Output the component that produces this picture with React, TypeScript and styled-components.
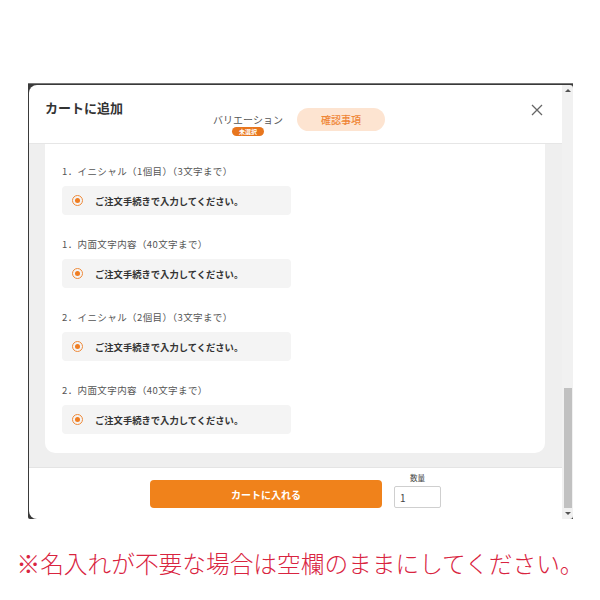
import React from 'react'
import styled, { createGlobalStyle } from 'styled-components'

const GlobalStyle = createGlobalStyle`
  body {
    margin: 0;
    background: #ffffff;
    font-family: 'Noto Sans CJK JP', 'Noto Sans', sans-serif;
  }
`

const Page = styled.div`
  width: 600px;
  height: 600px;
  padding-top: 83px;
  box-sizing: border-box;
`

const Frame = styled.div`
  margin-left: 28px;
  width: 545px;
  height: 436px;
  background: #3a3a3a;
  display: flex;
  padding: 1px 0 0 1px;
  box-sizing: border-box;
  border-top: 1px solid #777;
  border-radius: 0 0 0 2px;
`

const Modal = styled.div`
  flex: 1;
  display: flex;
  flex-direction: column;
  background: #ffffff;
  border-radius: 8px 0 0 8px;
  overflow: hidden;
`

const Header = styled.div`
  display: grid;
  grid-template-columns: 1fr auto 1fr;
  height: 58px;
  padding: 0 17px 0 16px;
  border-bottom: 1px solid #e6e6e6;
  box-sizing: content-box;
`

const Title = styled.div`
  font-size: 13px;
  font-weight: 700;
  color: #333;
  padding-top: 14px;
  line-height: 18px;
`

const Tabs = styled.div`
  display: flex;
  align-items: flex-start;
  gap: 14px;
  padding-top: 23px;
  margin-left: 8px;
`

const TabPlain = styled.div`
  display: flex;
  flex-direction: column;
  align-items: center;
  width: 70px;
  padding-top: 5px;
`

const TabLabel = styled.div`
  font-size: 10px;
  color: #555;
  line-height: 13px;
`

const Badge = styled.div`
  margin-top: 1px;
  background: #e8761e;
  color: #fff;
  font-size: 6px;
  font-weight: 700;
  line-height: 9px;
  padding: 0 7px;
  border-radius: 5px;
`

const TabActive = styled.div`
  width: 88px;
  height: 23px;
  border-radius: 12px;
  background: #fde4d1;
  color: #ef8636;
  font-size: 10px;
  font-weight: 500;
  display: flex;
  align-items: center;
  justify-content: center;
`

const Close = styled.button`
  justify-self: end;
  margin-top: 17px;
  width: 16px;
  height: 16px;
  padding: 0;
  border: none;
  background: none;
  display: flex;
  align-items: center;
  justify-content: center;
`

const Body = styled.div`
  flex: 1;
  background: #efefef;
  padding: 0 17px 14px 16px;
  display: flex;
  flex-direction: column;
`

const Card = styled.div`
  flex: 1;
  background: #ffffff;
  border-radius: 0 0 10px 10px;
  padding: 21px 17px 18px 17px;
  display: flex;
  flex-direction: column;
`

const Field = styled.div`
  display: flex;
  flex-direction: column;
  & + & {
    margin-top: 23px;
  }
`

const FieldLabel = styled.div`
  font-size: 9.5px;
  letter-spacing: 0.4px;
  color: #555;
  line-height: 13px;
  margin-bottom: 8px;
`

const Option = styled.div`
  width: 229px;
  height: 29px;
  background: #f4f4f4;
  border-radius: 4px;
  display: flex;
  align-items: center;
  padding-left: 10px;
  box-sizing: border-box;
  gap: 12px;
`

const Radio = styled.span`
  width: 9px;
  height: 9px;
  border-radius: 50%;
  border: 1.5px solid #ef8a3a;
  display: flex;
  align-items: center;
  justify-content: center;
  &::after {
    content: '';
    width: 5px;
    height: 5px;
    border-radius: 50%;
    background: #ef7d22;
  }
`

const OptionText = styled.span`
  font-size: 9.3px;
  font-weight: 700;
  color: #333;
`

const Footer = styled.div`
  height: 52px;
  border-top: 1px solid #e4e4e4;
  display: flex;
  justify-content: center;
  align-items: flex-start;
  gap: 12px;
  padding-top: 11px;
  box-sizing: border-box;
`

const CartButton = styled.button`
  width: 232px;
  height: 28px;
  border: none;
  border-radius: 4px;
  background: #f0821b;
  color: #fff;
  font-family: inherit;
  font-size: 10px;
  font-weight: 700;
  margin-top: 1px;
`

const Qty = styled.div`
  display: flex;
  flex-direction: column;
  align-items: center;
  margin-top: -7px;
`

const QtyLabel = styled.div`
  font-size: 7.5px;
  color: #444;
  line-height: 12px;
  margin-bottom: 2px;
`

const QtyInput = styled.div`
  width: 47px;
  height: 22px;
  border: 1px solid #cfcfcf;
  border-radius: 2px;
  box-sizing: border-box;
  font-size: 10px;
  color: #444;
  padding-left: 5px;
  display: flex;
  align-items: center;
`

const Scrollbar = styled.div`
  width: 11px;
  background: #f1f1f1;
  display: flex;
  flex-direction: column;
  align-items: center;
  border-radius: 0 3px 3px 0;
`

const Arrow = styled.div<{ down?: boolean }>`
  width: 0;
  height: 0;
  border-left: 3px solid transparent;
  border-right: 3px solid transparent;
  ${({ down }) => (down ? 'border-top: 3px solid #555;' : 'border-bottom: 3px solid #555;')}
  margin: 4px 0;
`

const Track = styled.div`
  flex: 1;
  width: 100%;
  display: flex;
  flex-direction: column;
  justify-content: flex-end;
  align-items: center;
`

const Thumb = styled.div`
  width: 8px;
  height: 120px;
  background: #c1c1c1;
`

const Caption = styled.div`
  margin-top: 31px;
  text-align: center;
  color: #d9243f;
  font-size: 23.7px;
  font-weight: 300;
  line-height: 26px;
  white-space: nowrap;
`

const fields = [
  '1．イニシャル（1個目）（3文字まで）',
  '1．内面文字内容（40文字まで）',
  '2．イニシャル（2個目）（3文字まで）',
  '2．内面文字内容（40文字まで）',
]

export default function App() {
  return (
    <Page>
      <GlobalStyle />
      <Frame>
        <Modal>
          <Header>
            <Title>カートに追加</Title>
            <Tabs>
              <TabPlain>
                <TabLabel>バリエーション</TabLabel>
                <Badge>未選択</Badge>
              </TabPlain>
              <TabActive>確認事項</TabActive>
            </Tabs>
            <Close aria-label="close">
              <svg width="12" height="12" viewBox="0 0 12 12">
                <path d="M1 1L11 11M11 1L1 11" stroke="#666" strokeWidth="1.3" />
              </svg>
            </Close>
          </Header>
          <Body>
            <Card>
              {fields.map((f) => (
                <Field key={f}>
                  <FieldLabel>{f}</FieldLabel>
                  <Option>
                    <Radio />
                    <OptionText>ご注文手続きで入力してください。</OptionText>
                  </Option>
                </Field>
              ))}
            </Card>
          </Body>
          <Footer>
            <CartButton>カートに入れる</CartButton>
            <Qty>
              <QtyLabel>数量</QtyLabel>
              <QtyInput>1</QtyInput>
            </Qty>
          </Footer>
        </Modal>
        <Scrollbar>
          <Arrow />
          <Track>
            <Thumb />
          </Track>
          <Arrow down />
        </Scrollbar>
      </Frame>
      <Caption>※名入れが不要な場合は空欄のままにしてください。</Caption>
    </Page>
  )
}
